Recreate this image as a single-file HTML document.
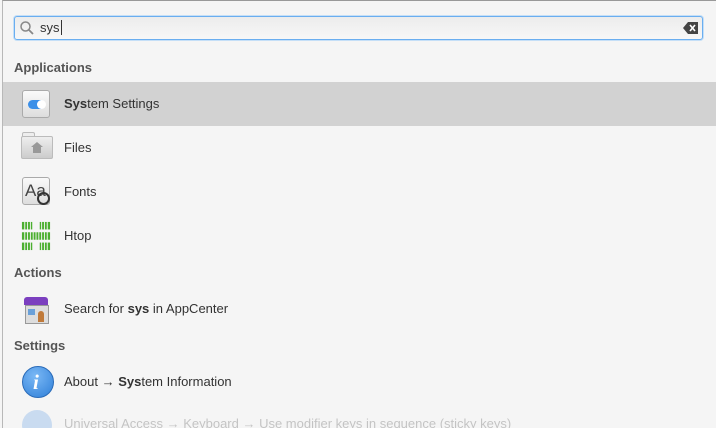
<!DOCTYPE html>
<html><head><style>
html,body{margin:0;width:716px;height:428px;overflow:hidden}
body{background:#f5f5f5;font-family:"Liberation Sans",sans-serif;position:relative}
.frame{position:absolute;left:2px;top:0;width:714px;height:428px;box-sizing:border-box;border-left:1px solid #b8b8b8;border-top:1px solid #999;background:#f5f5f5}
.search{position:absolute;left:14px;top:16px;width:687px;height:22px;border:1px solid #6aaef0;border-radius:3px;background:linear-gradient(#ececec,#f7f7f7);box-shadow:0 0 0 1px #c5dff7}
.hdr{position:absolute;left:14px;font-size:13px;font-weight:bold;color:#555}
.row{position:absolute;left:3px;width:713px;height:44px}
.row .t{position:absolute;left:61px;top:14px;font-size:13px;color:#333}
.ic{position:absolute;left:18px;top:7px;width:30px;height:30px}
</style></head><body>
<div class="frame"></div>
<div class="search">
<svg style="position:absolute;left:4px;top:3px" width="16" height="16"><circle cx="6.5" cy="6.5" r="4.5" fill="none" stroke="#888" stroke-width="1.5"/><line x1="10" y1="10" x2="14" y2="14" stroke="#888" stroke-width="1.8"/></svg>
<span style="position:absolute;left:25px;top:3px;font-size:13px;color:#333">sys<span style="border-left:1px solid #333;margin-left:1px"></span></span>
<svg style="position:absolute;right:4px;top:5px" width="15" height="12"><path d="M0 6 L5 0 H15 V12 H5 Z" fill="#444"/><path d="M7 3 L12 9 M12 3 L7 9" stroke="#fff" stroke-width="1.6"/></svg>
</div>
<div class="hdr" style="top:60px">Applications</div>
<div class="row" style="top:82px;background:#d2d2d2"><div class="ic" style="left:19px;top:8px;width:26px;height:26px;border:1px solid #aaa;border-radius:3px;background:linear-gradient(#fafafa,#ddd)"><div style="position:absolute;left:5px;top:9px;width:17px;height:9px;border-radius:5px;background:#3b8fe8"></div><div style="position:absolute;left:14px;top:9px;width:9px;height:9px;border-radius:5px;background:#fff"></div></div><span class="t"><b>Sys</b>tem Settings</span></div>
<div class="row" style="top:126px"><div class="ic" style="left:19px;top:6px;width:11px;height:4px;border:1px solid #bbb;border-bottom:none;border-radius:2px 2px 0 0;background:#eee"></div><div class="ic" style="top:10px;height:21px;border:1px solid #bbb;border-radius:2px;background:linear-gradient(#eee,#ccc)"><svg style="position:absolute;left:9px;top:5px" width="12" height="11"><path d="M6 0 L12 5 H10 V11 H2 V5 H0 Z" fill="#999"/></svg></div><span class="t">Files</span></div>
<div class="row" style="top:170px"><div class="ic" style="left:19px;width:26px;height:26px;border:1px solid #aaa;border-radius:3px;background:linear-gradient(#fafafa,#ddd)"><span style="position:absolute;left:2px;top:3px;font-size:17px;color:#444">Aa</span><div style="position:absolute;left:14px;top:14px;width:9px;height:9px;border:2px solid #333;border-radius:50%"></div></div><span class="t">Fonts</span></div>
<div class="row" style="top:214px"><svg class="ic" viewBox="0 0 32 32"><g fill="#4caf30"><rect x="1" y="1" width="11" height="8"/><rect x="20" y="1" width="11" height="8"/><rect x="1" y="12" width="30" height="8"/><rect x="1" y="23" width="11" height="8"/><rect x="20" y="23" width="11" height="8"/></g><g stroke="#f5f5f5" stroke-width="1"><path d="M4 0V32M7 0V32M10 0V32M13 0V32M16 0V32M19 0V32M22 0V32M25 0V32M28 0V32"/></g></svg><span class="t">Htop</span></div>
<div class="hdr" style="top:265px">Actions</div>
<div class="row" style="top:287px"><div class="ic" style="left:21px;top:10px;width:24px;height:26px"><div style="position:absolute;left:0;top:0;width:24px;height:8px;background:#7b3fbf;border-radius:3px 3px 0 0"></div><div style="position:absolute;left:1px;top:8px;width:22px;height:17px;background:#ddd;border:1px solid #999"></div><div style="position:absolute;left:4px;top:12px;width:7px;height:6px;background:#6aa0d8"></div><div style="position:absolute;left:14px;top:14px;width:6px;height:11px;background:#c07a3a;border-radius:3px 3px 0 0"></div></div><span class="t">Search for <b>sys</b> in AppCenter</span></div>
<div class="hdr" style="top:338px">Settings</div>
<div class="row" style="top:360px"><div class="ic" style="left:19px;top:6px;width:30px;height:30px;border-radius:50%;background:radial-gradient(circle at 40% 30%,#7ab8f5,#2f7fd8);border:1px solid #2a6bb8"><span style="position:absolute;left:10px;top:3px;font:italic bold 21px 'Liberation Serif',serif;color:#fff">i</span></div><span class="t">About → <b>Sys</b>tem Information</span></div>
<div class="row" style="top:404px;opacity:.25;height:24px;overflow:hidden"><div class="ic" style="left:19px;top:6px;width:30px;height:30px;border-radius:50%;background:#4a90e2"></div><span class="t" style="top:12px">Universal Access → Keyboard → Use modifier keys in sequence (sticky keys)</span></div>
</body></html>
